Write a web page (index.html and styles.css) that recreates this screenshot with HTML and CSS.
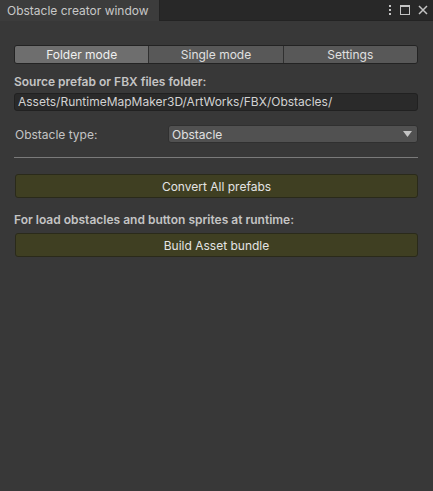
FILE: index.html
```html
<!DOCTYPE html>
<html>
<head>
<meta charset="utf-8">
<link rel="stylesheet" href="styles.css">
</head>
<body>
<div class="window">
  <div class="tabbar">
    <div class="tab">Obstacle creator window</div>
    <div class="tab-tools">
      <svg class="ico" width="6" height="12" viewBox="0 0 6 12"><rect x="2" y="1" width="2" height="2" fill="#c4c4c4"/><rect x="2" y="5" width="2" height="2" fill="#c4c4c4"/><rect x="2" y="9" width="2" height="2" fill="#c4c4c4"/></svg>
      <svg class="ico" width="12" height="12" viewBox="0 0 12 12"><rect x="1.5" y="1.5" width="9" height="9" fill="none" stroke="#c4c4c4" stroke-width="1"/><rect x="1" y="1" width="10" height="2" fill="#c4c4c4"/></svg>
      <svg class="ico" width="12" height="12" viewBox="0 0 12 12"><path d="M2 2 L10 10 M10 2 L2 10" stroke="#c4c4c4" stroke-width="1.5"/></svg>
    </div>
  </div>
  <div class="content">
    <div class="toolbar">
      <div class="seg active">Folder mode</div>
      <div class="seg">Single mode</div>
      <div class="seg">Settings</div>
    </div>
    <div class="label bold">Source prefab or FBX files folder:</div>
    <div class="field">Assets/RuntimeMapMaker3D/ArtWorks/FBX/Obstacles/</div>
    <div class="row">
      <div class="row-label">Obstacle type:</div>
      <div class="dropdown"><span>Obstacle</span><svg width="9" height="6" viewBox="0 0 9 6"><path d="M0 0 H9 L4.5 6 Z" fill="#c4c4c4"/></svg></div>
    </div>
    <div class="sep"></div>
    <div class="button">Convert All prefabs</div>
    <div class="label bold second">For load obstacles and button sprites at runtime:</div>
    <div class="button tight">Build Asset bundle</div>
  </div>
</div>
</body>
</html>
```
FILE: styles.css
```css
html, body {
  margin: 0;
  padding: 0;
  background: #383838;
  font-family: Inter, "Noto Sans", sans-serif;
  font-size: 12px;
  color: #c4c4c4;
}
.window {
  width: 433px;
  height: 491px;
  display: flex;
  flex-direction: column;
  background: #383838;
}
.tabbar {
  height: 21px;
  background: #282828;
  display: flex;
  justify-content: space-between;
  align-items: stretch;
  border-bottom: 1px solid #232323;
  box-sizing: border-box;
}
.tab {
  width: 160px;
  background: #3c3c3c;
  padding-left: 7px;
  box-sizing: border-box;
  display: flex;
  align-items: center;
  font-size: 12px;
  color: #c8c8c8;
  border-right: 1px solid #232323;
  margin-bottom: -1px;
}
.tab-tools {
  display: flex;
  align-items: center;
  gap: 6px;
  padding-right: 4px;
}
.ico { display: block; }
.content {
  padding: 24px 15px 0 14px;
  display: flex;
  flex-direction: column;
}
.toolbar {
  display: flex;
  height: 19px;
  border: 1px solid #232323;
  border-radius: 3px;
  overflow: hidden;
  box-sizing: border-box;
}
.seg {
  flex: 1;
  background: #585858;
  color: #e0e0e0;
  display: flex;
  align-items: center;
  justify-content: center;
  border-left: 1px solid #303030;
}
.seg:first-child { border-left: none; }
.seg.active { background: #6e6e6e; color: #f0f0f0; }
.label {
  margin-top: 10px;
  height: 16px;
  line-height: 16px;
  color: #c4c4c4;
}
.bold { font-weight: 600; }
.label.second { margin-top: 14px; }
.field {
  margin-top: 3px;
  height: 18px;
  background: #2a2a2a;
  border: 1px solid #212121;
  border-radius: 3px;
  box-sizing: border-box;
  padding-left: 3px;
  line-height: 16px;
  color: #d2d2d2;
}
.row {
  display: flex;
  align-items: center;
  margin-top: 14px;
  height: 18px;
}
.row-label {
  width: 153px;
  flex: none;
  padding-left: 1px;
}
.dropdown {
  flex: 1;
  height: 18px;
  background: #515151;
  border: 1px solid #303030;
  border-radius: 3px;
  box-sizing: border-box;
  display: flex;
  align-items: center;
  justify-content: space-between;
  padding: 0 5px 0 3px;
  color: #e0e0e0;
}
.sep {
  margin-top: 14px;
  height: 1px;
  background: #7a7a7a;
}
.button {
  margin-top: 16px;
  height: 24px;
  background: #3f3f22;
  border: 1px solid #2a2a1a;
  border-radius: 3px;
  box-sizing: border-box;
  display: flex;
  align-items: center;
  justify-content: center;
  color: #e4e4e4;
  margin-left: 1px;
}
.button.tight { margin-top: 5px; }
```
